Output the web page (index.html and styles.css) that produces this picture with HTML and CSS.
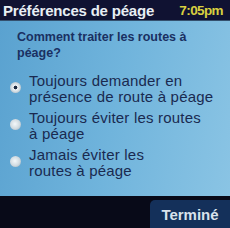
FILE: index.html
```html
<!DOCTYPE html>
<html>
<head>
<meta charset="utf-8">
<link rel="stylesheet" href="styles.css">
</head>
<body>
<div class="screen">
  <div class="header">
    <span class="title">Préférences de péage</span>
    <span class="time">7:05pm</span>
  </div>
  <div class="content">
    <div class="question">Comment traiter les routes à péage?</div>
    <div class="options">
      <div class="option">
        <span class="radio checked"></span>
        <span class="label">Toujours demander en<br>présence de route à péage</span>
      </div>
      <div class="option">
        <span class="radio"></span>
        <span class="label">Toujours éviter les routes<br>à péage</span>
      </div>
      <div class="option">
        <span class="radio"></span>
        <span class="label">Jamais éviter les<br>routes à péage</span>
      </div>
    </div>
  </div>
  <div class="footer">
    <div class="done">Terminé</div>
  </div>
</div>
</body>
</html>
```
FILE: styles.css
```css
* { box-sizing: border-box; }
html, body { margin: 0; padding: 0; }
body { width: 230px; height: 228px; overflow: hidden; font-family: "Liberation Sans", Arial, sans-serif; background: #0a0c1c; }
.screen { width: 230px; height: 228px; display: flex; flex-direction: column; }
.header {
  height: 21px; background: #101232; display: flex; justify-content: space-between; align-items: center;
  padding: 0 7px 0 3px; border-bottom: 1px solid #34506e;
}
.title { color: #e8eef4; font-weight: bold; font-size: 15px; letter-spacing: -0.2px; }
.time { color: #d8d040; font-weight: bold; font-size: 13.5px; letter-spacing: -0.6px; }
.content {
  flex: 1; background: linear-gradient(100deg, #5aa2d0 0%, #70b4dc 50%, #8ac4e4 100%);
  padding: 8px 6px 0 17px;
}
.question { color: #1a3062; font-weight: bold; font-size: 12.5px; line-height: 16px; width: 190px; }
.options { margin-top: 12px; margin-left: -7px; display: flex; flex-direction: column; gap: 5px; }
.option { display: flex; align-items: flex-start; }
.radio {
  width: 11px; height: 11px; border-radius: 50%; flex: none; margin-top: 9px; margin-right: 8px;
  background: radial-gradient(circle at 45% 45%, #f4f8fa 0%, #d0dae0 55%, #8ea4b4 100%);
}
.radio.checked { background: radial-gradient(circle, #1a2a40 0 1.6px, #f0f4f6 2.2px, #d0dae0 55%, #8ea4b4 100%); }
.label { color: #1a2a50; font-size: 15px; line-height: 16px; letter-spacing: 0.2px; }
.footer { height: 32px; background: #080a18; display: flex; justify-content: flex-end; align-items: flex-end; }
.done {
  width: 80px; height: 28px; background: #14305a; border-top-left-radius: 5px;
  color: #d8e2ec; font-weight: bold; font-size: 15px; display: flex; align-items: center; justify-content: center;
}
```
